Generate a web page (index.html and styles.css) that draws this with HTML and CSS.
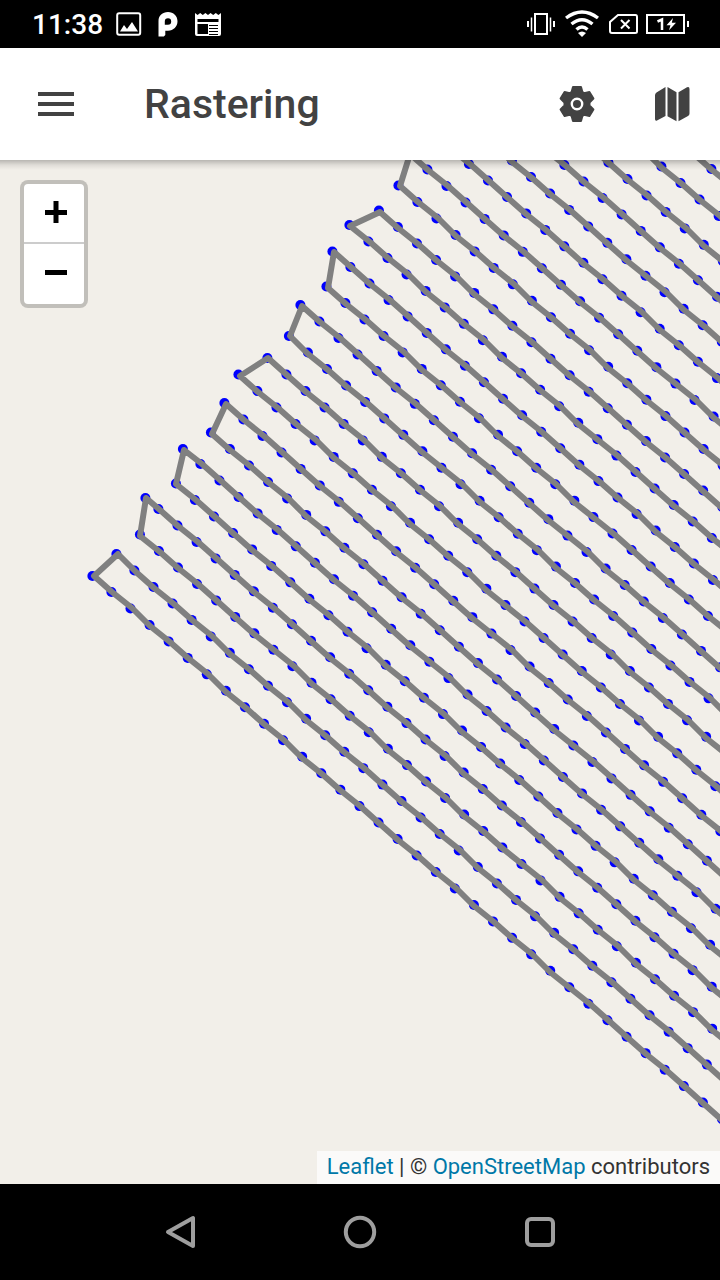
FILE: index.html
```html
<!DOCTYPE html>
<html lang="en">
<head>
<meta charset="utf-8">
<meta name="viewport" content="width=device-width, initial-scale=1">
<title>Rastering</title>
<link rel="stylesheet" href="styles.css">
</head>
<body>
<div class="status">
  <time class="clock">11:38</time>
  <div class="notices">
    <svg width="26" height="24" viewBox="0 0 26 24"><rect x="1.2" y="1.2" width="23" height="21.6" rx="2" fill="none" stroke="#fff" stroke-width="2"/><path fill="#fff" d="M4 19.5 8 13l3 4 5-7 6 9.500z"/></svg>
    <svg width="20" height="26" viewBox="0 0 20 26"><path fill="#fff" fill-rule="evenodd" d="M.5 25.500V10C.5 4.500 4.500 1 10 1s9.500 4 9.500 9.300-4 9.400-9.500 9.400H7.300v4.300L5.800 25.500zM10 7.300A3.200 3.200 0 0 0 6.800 10.500v3.200H10a3.200 3.200 0 0 0 0-6.400z"/></svg>
    <svg width="26" height="24" viewBox="0 0 26 24"><path fill="#fff" fill-rule="evenodd" d="M0 1l2.600 2 2.600-2 2.600 2 2.600-2L13 3l2.600-2 2.600 2 2.600-2 2.600 2L26 1v21q0 2-2 2H2q-2 0-2-2zM2.500 7v3h21V7zm0 5v10H13V12zM14 13v1h9v-1zm0 3v1h9v-1zm0 3v1h9v-1zm0 3v1h9v-1z"/></svg>
  </div>
  <div class="system">
    <svg width="28" height="24" viewBox="0 0 28 24" fill="none" stroke="#fff"><path stroke-width="2" d="M8 2h12v20H8zM1 9v6M27 9v6"/><path stroke-width="1.500" d="M4.500 5.500v14M23.500 5.500v14"/></svg>
    <svg width="34" height="28" viewBox="0 0 34 28" fill="none" stroke="#fff" stroke-width="3.400"><path d="M1 8q16-12 32 0M6.500 14q10.500-8.500 21 0M11.500 19.500q5.500-5 11 0"/><path fill="#fff" stroke="none" d="M13 23q4-3 8 0l-4 4z"/></svg>
    <svg width="30" height="22" viewBox="0 0 30 22" fill="none" stroke="#fff" stroke-width="2"><path d="M9 2h17.500Q28 2 28 4v14.500q0 1.500-2 1.500H3q-2 0-2-2V9zM12 7l8.500 8.500m0-8.500L12 15.500"/></svg>
    <svg width="44" height="22" viewBox="0 0 44 22" fill="none" stroke="#fff"><path stroke-width="2" d="M2 2h37v18H2zM43 8v6"/><path stroke-width="2.500" d="M12.500 8.500 17 6.500v10.500"/><path fill="#fff" stroke="none" d="m28 5-6.500 7.200h4L24 17.200l7-7.500h-4.200z"/></svg>
  </div>
</div>
<header class="bar">
  <button class="icon" aria-label="Menu"><svg width="36" height="24" viewBox="0 0 36 24"><path fill="#424242" d="M0 0h36v4H0zm0 10h36v4H0zm0 10h36v4H0z"/></svg></button>
  <h1 class="title">Rastering</h1>
  <button class="icon" aria-label="Settings"><svg width="36" height="36" viewBox="0 0 36 36"><path fill="#424242" stroke="#424242" stroke-width="2" stroke-linejoin="round" d="M14 1h8l1.400 5 1.800 1.200 5.200-1.300 4 6.700-3.900 4v2.800l3.900 4-4 6.700-5.200-1.300-1.800 1.200-1.400 5h-8l-1.400-5-1.800-1.200-5.200 1.300-4-6.700 3.900-4v-2.800l-3.900-4 4-6.700 5.200 1.300L12.600 6z"/><circle cx="18" cy="18" r="5.200" fill="none" stroke="#fff" stroke-width="2.400"/></svg></button>
  <button class="icon icon-map" aria-label="Maps"><svg width="36" height="36" viewBox="0 0 36 36"><path fill="#424242" d="M11.500 1v29L3 34.600q-2 .8-2-1.600V9.200Q1 7.500 2.500 6.500zM13.500 1l9 5.200v29l-9-5zM24.500 6.200 33 1.300q2.500-1 2.500 1.700v24.500q0 1.500-1.500 2.500l-9.500 5.200z"/></svg></button>
</header>
<main class="map">
  <svg class="tracks" role="img" aria-label="Raster track"><path id="route" fill="none" stroke="gray" stroke-width="6" stroke-linejoin="round" stroke-linecap="round"/></svg>
  <div class="shade"></div>
  <div class="zoom">
    <button aria-label="Zoom in"><svg width="24" height="24" viewBox="0 0 24 24"><path fill="#000" d="M1 9h8.500V0h5v9H23v5h-8.500v8h-5v-8H1z"/></svg></button>
    <button aria-label="Zoom out"><svg width="24" height="24" viewBox="0 0 24 24"><path fill="#000" d="M1 8h22v5H1z"/></svg></button>
  </div>
  <div class="credit"><a href="#">Leaflet</a> | © <a href="#">OpenStreetMap</a> contributors</div>
</main>
<nav class="nav">
  <button aria-label="Back"><svg width="36" height="36" viewBox="0 0 36 36"><path d="M31 4v28L6 18z"/></svg></button>
  <button aria-label="Home"><svg width="36" height="36" viewBox="0 0 36 36"><circle cx="18" cy="18" r="14.200"/></svg></button>
  <button aria-label="Recent apps"><svg width="36" height="36" viewBox="0 0 36 36"><rect x="5" y="5" width="26" height="26" rx="4"/></svg></button>
</nav>
<script src="tracks.js"></script>
</body>
</html>
```
FILE: styles.css
```css
* { box-sizing: border-box; }
body {
  margin: 0;
  min-height: 100vh;
  display: flex;
  flex-direction: column;
  font-family: Roboto, "Liberation Sans", sans-serif;
  background: #000;
}
svg { display: block; }
button { border: 0; padding: 0; background: none; display: grid; place-items: center; }
.status {
  height: 48px;
  padding: 0 32px;
  display: flex;
  align-items: center;
  color: #fff;
}
.clock { font-size: 28px; font-weight: 500; line-height: 48px; padding-top: 2px; }
.notices { display: flex; align-items: center; gap: 16px; margin-left: 13px; }
.notices svg:last-child { margin-left: 1px; }
.system { display: flex; align-items: center; gap: 10px; margin-left: auto; margin-right: -1px; }
.system svg:last-child { margin-left: -4px; }
.bar {
  height: 112px;
  padding: 0 8px 0 16px;
  display: flex;
  align-items: center;
  background: #fff;
  color: #424242;
}
.icon { width: 80px; height: 80px; flex: none; }
.icon-map { margin-left: 15px; }
.title { margin: 0 0 0 48px; flex: 1; font-size: 41px; line-height: 48px; font-weight: 500; }
.map { position: relative; flex: 1; background: #f2efe9; overflow: hidden; }
.tracks { position: absolute; width: 100%; height: 100%; }
.shade {
  position: absolute;
  inset: 0 0 auto;
  height: 10px;
  background: linear-gradient(rgba(0, 0, 0, .24), rgba(0, 0, 0, .08) 50%, transparent);
}
.zoom {
  position: absolute;
  top: 20px;
  left: 20px;
  border: 4px solid rgba(0, 0, 0, .2);
  border-radius: 8px;
  background: #fff;
  background-clip: padding-box;
}
.zoom button { width: 60px; height: 60px; padding-left: 4px; }
.zoom button:first-child { border-bottom: 2px solid #ccc; }
.credit {
  position: absolute;
  right: 0;
  bottom: 0;
  padding: 0 10px 2px;
  font-size: 22px;
  line-height: 31px;
  color: #333;
  background: rgba(255, 255, 255, .7);
}
.credit a { color: #0078a8; text-decoration: none; }
.nav { height: 96px; display: flex; justify-content: center; gap: 100px; }
.nav button { width: 80px; }
.nav svg { fill: none; stroke: #9e9e9e; stroke-width: 4; stroke-linejoin: round; }
```
FILE: tracks.js
```js
// Each pass: first point, then second point; the rest follow at a constant step.
const passes = [
  [92, 416, 111, 432], [116, 394, 134, 410.5],
  [139.5, 374.5, 158.5, 391], [145, 338, 158, 349],
  [175.5, 323.5, 194.5, 340], [182.5, 289, 200, 304],
  [210.5, 272.5, 229.5, 289], [224, 243, 243, 259.5],
  [238, 214.5, 257, 231], [267, 198, 286, 214.5],
  [288.5, 176, 307.5, 192.5], [300, 145, 319, 161.5],
  [326, 126.5, 345, 143], [332, 91.5, 350, 107],
  [349, 65, 368, 81.5], [378.5, 50.5, 397.5, 67],
  [398, 25.5, 417, 42], [408, -7, 427, 9.5],
  [449.5, -12.5, 468.5, 4], [492.5, -16, 511.5, 0.5],
  [545, -11.5, 564, 5], [589, -14, 608, 2.5],
  [642, -10, 661, 6.5], [692, -7.5, 711, 9]
];
const stepX = 19.08, stepY = 16.47;
const route = document.getElementById("route");
const snap = v => Math.round(v / 2) * 2;
const lines = passes.map(([x, y, nx, ny]) => {
  const points = [[x, y]];
  for (let i = 0; i < 36; i++) points.push([nx + i * stepX, ny + i * stepY]);
  return points;
});
for (const [x, y] of lines.flat()) {
  const dot = document.createElementNS("http://www.w3.org/2000/svg", "circle");
  dot.setAttribute("cx", x + 0.4);
  dot.setAttribute("cy", y);
  dot.setAttribute("r", 5);
  dot.setAttribute("fill", "blue");
  route.before(dot);
}
const toPath = points => "M" + points.map(([x, y]) => snap(x + 1) + " " + snap(y + 0.5)).join("L");
let d = "";
for (let i = 0; i < 18; i += 2) d += toPath([...lines[i]].reverse().concat(lines[i + 1]));
for (let i = 18; i < lines.length; i++) d += toPath(lines[i]);
route.setAttribute("d", d);
```
